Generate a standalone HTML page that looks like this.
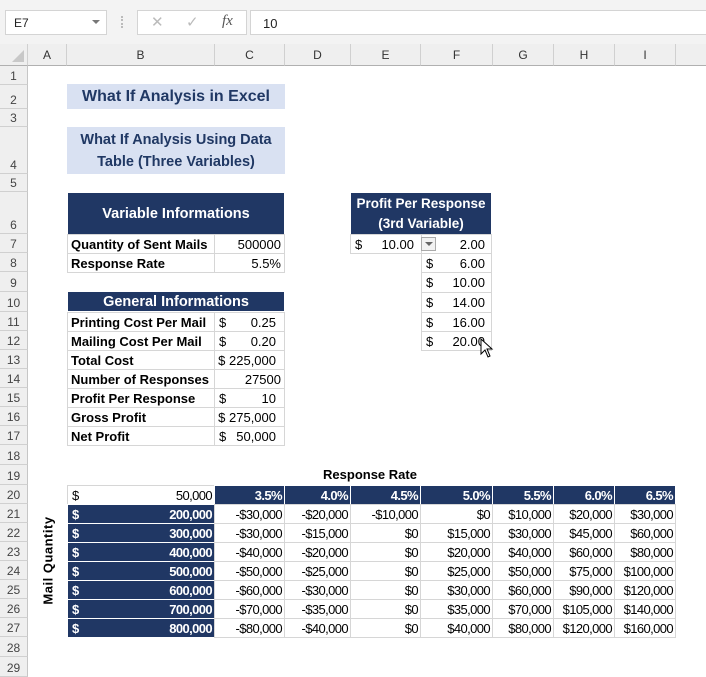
<!DOCTYPE html>
<html><head><meta charset="utf-8"><style>
body{margin:0;width:706px;height:671px;overflow:hidden;background:#fff;font-family:"Liberation Sans",sans-serif;position:relative}
div{box-sizing:border-box}
.a{position:absolute}
.c{position:absolute;display:flex;align-items:center;padding:0 3px;white-space:nowrap;font-size:13px;color:#000;border:1px solid #d6d6d6;margin:0 0 0 0}
.r{justify-content:flex-end}
.m{justify-content:center}
.b{font-weight:bold}
.n{background:#203764;color:#fff;font-weight:bold;border-color:#fff}
.nr{font-size:13px;letter-spacing:-0.6px;padding:0 2px}
.rh{position:absolute;left:0;width:28px;border-bottom:1px solid #d0d0d0;border-right:1px solid #c6c6c6;background:#efefef;color:#444;font-size:12px;display:flex;align-items:flex-end;justify-content:center;padding-bottom:1px}
.ch{position:absolute;top:44px;height:22px;border-right:1px solid #d0d0d0;background:#efefef;color:#333;font-size:12px;display:flex;align-items:center;justify-content:center;border-bottom:1px solid #b0b0b0}
.dl{position:absolute;left:4px}
</style></head><body>
<div class="a" style="left:0;top:0;width:706px;height:44px;background:#f3f3f3"></div>
<div class="a" style="left:5px;top:10px;width:102px;height:25px;background:#fff;border:1px solid #d4d4d4;font-size:12px;padding:5px 8px;color:#222">E7<span style="position:absolute;right:6px;top:9px;border:4px solid transparent;border-top:4px solid #777"></span></div>
<div class="a" style="left:121px;top:16px;width:2px;height:12px;border-left:2px dotted #bbb"></div>
<div class="a" style="left:137px;top:10px;width:110px;height:25px;background:#fff;border:1px solid #d4d4d4;color:#bbb;font-size:15px"><span class="a" style="left:13px;top:2px">✕</span><span class="a" style="left:48px;top:2px">✓</span><span class="a" style="left:84px;top:2px;color:#555;font-style:italic;font-family:'Liberation Serif',serif">fx</span></div>
<div class="a" style="left:250px;top:10px;width:460px;height:25px;background:#fff;border:1px solid #d4d4d4;font-size:13px;padding:5px 12px;color:#222">10</div>
<div class="a" style="left:0;top:44px;width:28px;height:22px;background:#efefef;border-right:1px solid #d0d0d0;border-bottom:1px solid #b0b0b0"><span class="a" style="right:3px;bottom:3px;border-left:12px solid transparent;border-bottom:12px solid #c8c8c8"></span></div>
<div class="ch" style="left:28px;width:39px">A</div>
<div class="ch" style="left:67px;width:148px">B</div>
<div class="ch" style="left:215px;width:70px">C</div>
<div class="ch" style="left:285px;width:66px">D</div>
<div class="ch" style="left:351px;width:70px">E</div>
<div class="ch" style="left:421px;width:72px">F</div>
<div class="ch" style="left:493px;width:61px">G</div>
<div class="ch" style="left:554px;width:61px">H</div>
<div class="ch" style="left:615px;width:61px">I</div>
<div class="ch" style="left:676px;width:30px;border-right:0"></div>

<div class="rh" style="top:66px;height:19px">1</div>
<div class="rh" style="top:85px;height:24px">2</div>
<div class="rh" style="top:109px;height:18px">3</div>
<div class="rh" style="top:127px;height:47px">4</div>
<div class="rh" style="top:174px;height:18px">5</div>
<div class="rh" style="top:192px;height:42px">6</div>
<div class="rh" style="top:234px;height:19px">7</div>
<div class="rh" style="top:253px;height:19px">8</div>
<div class="rh" style="top:272px;height:20px">9</div>
<div class="rh" style="top:292px;height:20px">10</div>
<div class="rh" style="top:312px;height:19px">11</div>
<div class="rh" style="top:331px;height:19px">12</div>
<div class="rh" style="top:350px;height:19px">13</div>
<div class="rh" style="top:369px;height:19px">14</div>
<div class="rh" style="top:388px;height:19px">15</div>
<div class="rh" style="top:407px;height:19px">16</div>
<div class="rh" style="top:426px;height:19px">17</div>
<div class="rh" style="top:445px;height:20px">18</div>
<div class="rh" style="top:465px;height:20px">19</div>
<div class="rh" style="top:485px;height:19px">20</div>
<div class="rh" style="top:504px;height:19px">21</div>
<div class="rh" style="top:523px;height:19px">22</div>
<div class="rh" style="top:542px;height:19px">23</div>
<div class="rh" style="top:561px;height:19px">24</div>
<div class="rh" style="top:580px;height:19px">25</div>
<div class="rh" style="top:599px;height:19px">26</div>
<div class="rh" style="top:618px;height:19px">27</div>
<div class="rh" style="top:637px;height:20px">28</div>
<div class="rh" style="top:657px;height:20px">29</div>

<div class="a" style="left:67px;top:84px;width:218px;height:25px;background:#d9e1f2;color:#203864;font-weight:bold;font-size:16px;display:flex;align-items:center;justify-content:center">What If Analysis in Excel</div>
<div class="a" style="left:67px;top:127px;width:218px;height:47px;background:#d9e1f2;color:#203864;font-weight:bold;font-size:14.5px;line-height:22px;text-align:center;padding-top:2px">What If Analysis Using Data<br>Table (Three Variables)</div>

<div class="c n m" style="left:67px;top:192px;width:218px;height:43px;font-size:14.5px">Variable Informations</div>
<div class="c b" style="left:67px;top:234px;width:148px;height:20px">Quantity of Sent Mails</div>
<div class="c r" style="left:214px;top:234px;width:71px;height:20px">500000</div>
<div class="c b" style="left:67px;top:253px;width:148px;height:20px">Response Rate</div>
<div class="c r" style="left:214px;top:253px;width:71px;height:20px">5.5%</div>

<div class="c n m" style="left:67px;top:291px;width:218px;height:21px;font-size:14.5px">General Informations</div>
<div class="c b" style="left:67px;top:312px;width:148px;height:20px">Printing Cost Per Mail</div>
<div class="c r" style="left:214px;top:312px;width:71px;height:20px;padding-right:8px"><span class="dl">$</span>0.25</div>
<div class="c b" style="left:67px;top:331px;width:148px;height:20px">Mailing Cost Per Mail</div>
<div class="c r" style="left:214px;top:331px;width:71px;height:20px;padding-right:8px"><span class="dl">$</span>0.20</div>
<div class="c b" style="left:67px;top:350px;width:148px;height:20px">Total Cost</div>
<div class="c r" style="left:214px;top:350px;width:71px;height:20px;padding-right:8px">$ 225,000</div>
<div class="c b" style="left:67px;top:369px;width:148px;height:20px">Number of Responses</div>
<div class="c r" style="left:214px;top:369px;width:71px;height:20px">27500</div>
<div class="c b" style="left:67px;top:388px;width:148px;height:20px">Profit Per Response</div>
<div class="c r" style="left:214px;top:388px;width:71px;height:20px;padding-right:8px"><span class="dl">$</span>10</div>
<div class="c b" style="left:67px;top:407px;width:148px;height:20px">Gross Profit</div>
<div class="c r" style="left:214px;top:407px;width:71px;height:20px;padding-right:8px">$ 275,000</div>
<div class="c b" style="left:67px;top:426px;width:148px;height:20px">Net Profit</div>
<div class="c r" style="left:214px;top:426px;width:71px;height:20px;padding-right:8px"><span class="dl">$</span>50,000</div>

<div class="c n m" style="left:350px;top:192px;width:142px;height:43px;font-size:13.5px;line-height:20px;text-align:center;white-space:normal">Profit Per Response (3rd Variable)</div>
<div class="c r" style="left:350px;top:234px;width:72px;height:20px;padding-right:7px"><span class="dl">$</span>10.00</div>
<div class="c r" style="left:421px;top:234px;width:71px;height:20px;padding-right:6px">2.00</div>
<div class="a" style="left:421px;top:237px;width:15px;height:14px;border:1px solid #aaa;background:#f2f2f2"><span class="a" style="left:3px;top:4px;border:4px solid transparent;border-top:4px solid #666"></span></div>
<div class="c r" style="left:421px;top:253px;width:71px;height:20px;padding-right:6px"><span class="dl">$</span>6.00</div>
<div class="c r" style="left:421px;top:272px;width:71px;height:21px;padding-right:6px"><span class="dl">$</span>10.00</div>
<div class="c r" style="left:421px;top:292px;width:71px;height:21px;padding-right:6px"><span class="dl">$</span>14.00</div>
<div class="c r" style="left:421px;top:312px;width:71px;height:20px;padding-right:6px"><span class="dl">$</span>16.00</div>
<div class="c r" style="left:421px;top:331px;width:71px;height:20px;padding-right:6px"><span class="dl">$</span>20.00</div>
<svg class="a" style="left:480px;top:338px" width="14" height="22" viewBox="0 0 14 22"><path d="M1 1 L1 16 L5 12 L8 19 L10 18 L7 11 L12 11 Z" fill="#fff" stroke="#000" stroke-width="1"/></svg>

<div class="a b" style="left:300px;top:467px;width:140px;text-align:center;font-size:13px">Response Rate</div>
<div class="a b" style="left:-2px;top:553px;width:100px;text-align:center;font-size:13px;transform:rotate(-90deg);letter-spacing:.5px">Mail Quantity</div>

<div class="c r nr" style="left:67px;top:485px;width:148px;height:20px"><span class="dl">$</span>50,000</div>
<div class="c n r nr" style="left:214px;top:485px;width:71px;height:20px">3.5%</div>
<div class="c n r nr" style="left:284px;top:485px;width:67px;height:20px">4.0%</div>
<div class="c n r nr" style="left:350px;top:485px;width:71px;height:20px">4.5%</div>
<div class="c n r nr" style="left:420px;top:485px;width:73px;height:20px">5.0%</div>
<div class="c n r nr" style="left:492px;top:485px;width:62px;height:20px">5.5%</div>
<div class="c n r nr" style="left:553px;top:485px;width:62px;height:20px">6.0%</div>
<div class="c n r nr" style="left:614px;top:485px;width:62px;height:20px">6.5%</div>

<div class="c n r nr" style="left:67px;top:504px;width:148px;height:20px"><span class="dl">$</span>200,000</div>
<div class="c r nr" style="left:214px;top:504px;width:71px;height:20px">-$30,000</div>
<div class="c r nr" style="left:284px;top:504px;width:67px;height:20px">-$20,000</div>
<div class="c r nr" style="left:350px;top:504px;width:71px;height:20px">-$10,000</div>
<div class="c r nr" style="left:420px;top:504px;width:73px;height:20px">$0</div>
<div class="c r nr" style="left:492px;top:504px;width:62px;height:20px">$10,000</div>
<div class="c r nr" style="left:553px;top:504px;width:62px;height:20px">$20,000</div>
<div class="c r nr" style="left:614px;top:504px;width:62px;height:20px">$30,000</div>

<div class="c n r nr" style="left:67px;top:523px;width:148px;height:20px"><span class="dl">$</span>300,000</div>
<div class="c r nr" style="left:214px;top:523px;width:71px;height:20px">-$30,000</div>
<div class="c r nr" style="left:284px;top:523px;width:67px;height:20px">-$15,000</div>
<div class="c r nr" style="left:350px;top:523px;width:71px;height:20px">$0</div>
<div class="c r nr" style="left:420px;top:523px;width:73px;height:20px">$15,000</div>
<div class="c r nr" style="left:492px;top:523px;width:62px;height:20px">$30,000</div>
<div class="c r nr" style="left:553px;top:523px;width:62px;height:20px">$45,000</div>
<div class="c r nr" style="left:614px;top:523px;width:62px;height:20px">$60,000</div>

<div class="c n r nr" style="left:67px;top:542px;width:148px;height:20px"><span class="dl">$</span>400,000</div>
<div class="c r nr" style="left:214px;top:542px;width:71px;height:20px">-$40,000</div>
<div class="c r nr" style="left:284px;top:542px;width:67px;height:20px">-$20,000</div>
<div class="c r nr" style="left:350px;top:542px;width:71px;height:20px">$0</div>
<div class="c r nr" style="left:420px;top:542px;width:73px;height:20px">$20,000</div>
<div class="c r nr" style="left:492px;top:542px;width:62px;height:20px">$40,000</div>
<div class="c r nr" style="left:553px;top:542px;width:62px;height:20px">$60,000</div>
<div class="c r nr" style="left:614px;top:542px;width:62px;height:20px">$80,000</div>

<div class="c n r nr" style="left:67px;top:561px;width:148px;height:20px"><span class="dl">$</span>500,000</div>
<div class="c r nr" style="left:214px;top:561px;width:71px;height:20px">-$50,000</div>
<div class="c r nr" style="left:284px;top:561px;width:67px;height:20px">-$25,000</div>
<div class="c r nr" style="left:350px;top:561px;width:71px;height:20px">$0</div>
<div class="c r nr" style="left:420px;top:561px;width:73px;height:20px">$25,000</div>
<div class="c r nr" style="left:492px;top:561px;width:62px;height:20px">$50,000</div>
<div class="c r nr" style="left:553px;top:561px;width:62px;height:20px">$75,000</div>
<div class="c r nr" style="left:614px;top:561px;width:62px;height:20px">$100,000</div>

<div class="c n r nr" style="left:67px;top:580px;width:148px;height:20px"><span class="dl">$</span>600,000</div>
<div class="c r nr" style="left:214px;top:580px;width:71px;height:20px">-$60,000</div>
<div class="c r nr" style="left:284px;top:580px;width:67px;height:20px">-$30,000</div>
<div class="c r nr" style="left:350px;top:580px;width:71px;height:20px">$0</div>
<div class="c r nr" style="left:420px;top:580px;width:73px;height:20px">$30,000</div>
<div class="c r nr" style="left:492px;top:580px;width:62px;height:20px">$60,000</div>
<div class="c r nr" style="left:553px;top:580px;width:62px;height:20px">$90,000</div>
<div class="c r nr" style="left:614px;top:580px;width:62px;height:20px">$120,000</div>

<div class="c n r nr" style="left:67px;top:599px;width:148px;height:20px"><span class="dl">$</span>700,000</div>
<div class="c r nr" style="left:214px;top:599px;width:71px;height:20px">-$70,000</div>
<div class="c r nr" style="left:284px;top:599px;width:67px;height:20px">-$35,000</div>
<div class="c r nr" style="left:350px;top:599px;width:71px;height:20px">$0</div>
<div class="c r nr" style="left:420px;top:599px;width:73px;height:20px">$35,000</div>
<div class="c r nr" style="left:492px;top:599px;width:62px;height:20px">$70,000</div>
<div class="c r nr" style="left:553px;top:599px;width:62px;height:20px">$105,000</div>
<div class="c r nr" style="left:614px;top:599px;width:62px;height:20px">$140,000</div>

<div class="c n r nr" style="left:67px;top:618px;width:148px;height:20px"><span class="dl">$</span>800,000</div>
<div class="c r nr" style="left:214px;top:618px;width:71px;height:20px">-$80,000</div>
<div class="c r nr" style="left:284px;top:618px;width:67px;height:20px">-$40,000</div>
<div class="c r nr" style="left:350px;top:618px;width:71px;height:20px">$0</div>
<div class="c r nr" style="left:420px;top:618px;width:73px;height:20px">$40,000</div>
<div class="c r nr" style="left:492px;top:618px;width:62px;height:20px">$80,000</div>
<div class="c r nr" style="left:553px;top:618px;width:62px;height:20px">$120,000</div>
<div class="c r nr" style="left:614px;top:618px;width:62px;height:20px">$160,000</div>
</body></html>
